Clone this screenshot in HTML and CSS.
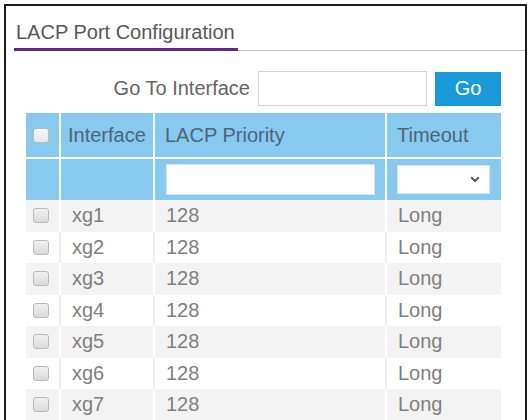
FILE: index.html
```html
<!DOCTYPE html>
<html lang="en">

<head>
  <meta charset="UTF-8">
  <meta name="viewport" content="width=device-width, initial-scale=1.0">
  <title>LACP Port Configuration</title>

  <link rel="stylesheet" href="styles.css">
</head>

<body>
  <div class="panel">
    <div class="panel-head">
      <h1 class="panel-title">LACP Port Configuration</h1>
    </div>

    <div class="panel-body">
      <form class="goto">
        <label for="goto-if">Go To Interface</label>
        <input id="goto-if" type="text" />
        <button type="button">Go</button>
      </form>

      <table class="grid">
        <colgroup>
          <col class="col-cb">
          <col class="col-if">
          <col class="col-prio">
          <col class="col-timeout">
        </colgroup>
        <thead>
          <tr class="head-row">
            <th class="cb"><span class="check"></span></th>
            <th class="if">Interface</th>
            <th>LACP Priority</th>
            <th>Timeout</th>
          </tr>
          <tr class="filter-row">
            <th></th>
            <th></th>
            <th class="prio-filter"><input class="filter-input" type="text" /></th>
            <th class="timeout-filter">
              <div class="filter-select">
                <svg width="10" height="7" viewBox="0 0 10 7">
                  <path d="M1.2 1.2 L5 5 L8.8 1.2" fill="none" stroke="#5a5a5a" stroke-width="2" />
                </svg>
              </div>
            </th>
          </tr>
        </thead>
        <tbody>
          <tr><td class="cb"><span class="check"></span></td><td>xg1</td><td>128</td><td>Long</td></tr>
          <tr><td class="cb"><span class="check"></span></td><td>xg2</td><td>128</td><td>Long</td></tr>
          <tr><td class="cb"><span class="check"></span></td><td>xg3</td><td>128</td><td>Long</td></tr>
          <tr><td class="cb"><span class="check"></span></td><td>xg4</td><td>128</td><td>Long</td></tr>
          <tr><td class="cb"><span class="check"></span></td><td>xg5</td><td>128</td><td>Long</td></tr>
          <tr><td class="cb"><span class="check"></span></td><td>xg6</td><td>128</td><td>Long</td></tr>
          <tr><td class="cb"><span class="check"></span></td><td>xg7</td><td>128</td><td>Long</td></tr>
        </tbody>
      </table>
    </div>
  </div>
</body>

</html>
```

FILE: styles.css
```css
* {
  box-sizing: border-box;
}

html {
  overflow: hidden;
}

body {
  background: #fff;
  font-family: "Liberation Sans", Arial, sans-serif;
  margin: 0;
}

.panel {
  border: 2px solid #1b1b1b;
  margin: 4px 4px 0;
  min-height: 440px;
}

/* title with the purple tab underline */
.panel-head {
  border-bottom: 1px solid #c2b4cf;
  display: flex;
  margin-left: 8px;
  padding-top: 15px;
}

.panel-title {
  border-bottom: 3px solid #5d2b84;
  color: #585858;
  font-size: 20px;
  font-weight: normal;
  line-height: 23px;
  margin: 0 0 -1px;
  padding: 0 3px 4px 2px;
}

.panel-body {
  padding: 20px 24px 20px 20px;
}

.goto {
  align-items: center;
  display: flex;
  gap: 8px;
  justify-content: flex-end;
  margin: 0 0 7px;
}

.goto label {
  color: #666;
  font-size: 20px;
}

.goto input {
  border: 1px solid #d4d4d4;
  height: 35px;
  width: 169px;
}

.goto button {
  background: #1a9ad8;
  border: none;
  color: #fff;
  font-family: inherit;
  font-size: 20px;
  height: 34px;
  width: 66px;
}

.grid {
  border-spacing: 0;
  table-layout: fixed;
  width: 475px;
}

.col-cb {
  width: 35px;
}

.col-if {
  width: 94px;
}

.col-prio {
  width: 232px;
}

.col-timeout {
  width: 114px;
}

.grid th,
.grid td {
  font-size: 20px;
  font-weight: normal;
  padding: 0 11px;
  text-align: left;
  vertical-align: middle;
}

.grid th:not(:last-child),
.grid td:not(:last-child) {
  border-right: 2px solid #fff;
}

.grid thead th {
  background: #88caef;
  color: #4e6477;
}

.head-row th {
  border-bottom: 2px solid #fff;
  height: 46px;
  padding-left: 10px;
}

.head-row th.if {
  padding-left: 7px;
}

.grid .cb {
  padding: 0 0 0 7px;
}

.check {
  background: linear-gradient(#f0f0f0, #dadada);
  border: 1px solid #b9b9b9;
  border-radius: 3px;
  display: block;
  height: 15px;
  width: 16px;
}

.head-row .check {
  background: linear-gradient(#fafafa, #e6e6e6);
}

.filter-row th {
  height: 41px;
}

.grid .prio-filter {
  padding: 0 10px 0 11px;
}

.grid .timeout-filter {
  padding: 0 11px 0 10px;
}

.filter-input {
  background: #fff;
  border: 1px solid #d2e6f4;
  display: block;
  height: 31px;
  width: 100%;
}

.filter-select {
  align-items: center;
  background: #fff;
  border: 1px solid #d2e6f4;
  display: flex;
  height: 29px;
  justify-content: flex-end;
  padding-right: 9px;
}

.grid tbody td {
  color: #808080;
  height: 31.5px;
}

.grid tbody tr:nth-child(odd) {
  background: #f3f3f3;
}

.grid tbody tr:nth-child(even) td:not(:last-child) {
  border-right-color: #eeeeee;
}
```
